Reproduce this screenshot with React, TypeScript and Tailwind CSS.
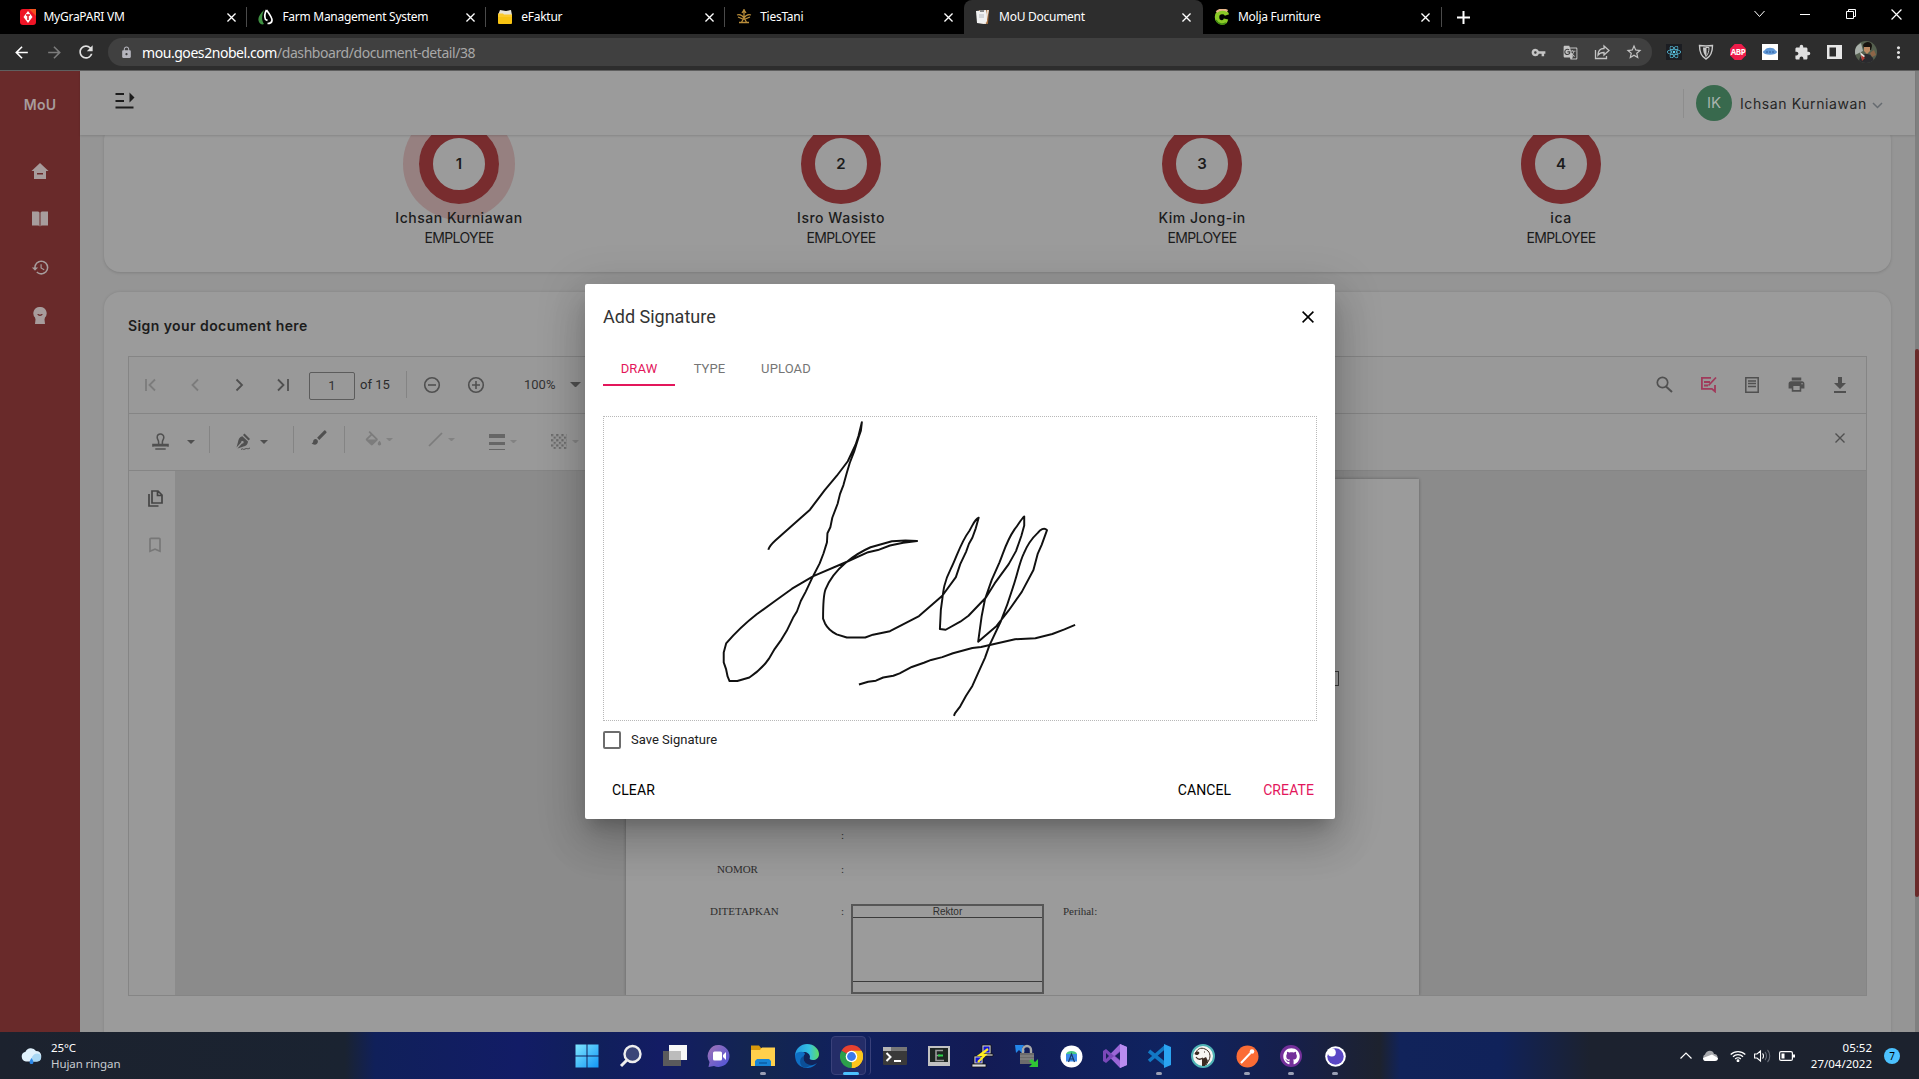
import React from "react";
import {
  MdSearch, MdPrint, MdLock, MdVpnKey, MdStarBorder, MdExtension, MdMoreVert, MdGTranslate,
  MdBrush, MdHistory, MdFormatColorFill, MdOutlineFileCopy, MdBookmarkBorder, MdArrowBack, MdArrowForward, MdRefresh,
} from "react-icons/md";
import { FaReact, FaGithub } from "react-icons/fa";

type Kids = { children?: React.ReactNode };

/* ---------- Browser chrome ---------- */

const Cross = ({ s = 9, w = 1.5, c = "currentColor" }: { s?: number; w?: number; c?: string }) => (
  <svg width={s} height={s} viewBox="0 0 10 10" stroke={c} strokeWidth={w} fill="none"><path d="M.5.5l9 9M9.5.5l-9 9" /></svg>
);

const favicons = {
  grapari: (
    <svg width="16" height="16" viewBox="0 0 16 16"><rect width="16" height="16" rx="3" fill="#ef1426" /><path d="M16 0v7L9 0z" fill="#f4511e" /><path d="M8 2l4.500 6L8 14 3.500 8z" fill="#fff" /><path d="M6 6h4M8 6v5" stroke="#e01425" strokeWidth="1.500" /></svg>
  ),
  farm: (
    <svg width="16" height="16" viewBox="0 0 16 16" fill="none"><path d="M6 1C2 5-1 9 1 13c1 2 3 3 5 2-3-4-2-9 0-14z" fill="#3f9142" /><path d="M8.500 1c3 4 6 8 5.500 10.500-.3 2-2 3-4.500 3M8.500 1C6.800 4 6.500 8 7.500 10.500l2 1" stroke="#fff" strokeWidth="1.700" /></svg>
  ),
  folder: (
    <svg width="16" height="16" viewBox="0 0 16 16"><path d="M1 6l2-5 6 1 5-1 1 5z" fill="#e8e4d6" /><path d="M1 4.500h5l1 1h8V14l-1 1H2l-1-1z" fill="#fbca2b" /><path d="M1 8h14v6l-1 1H2l-1-1z" fill="#f8c312" /></svg>
  ),
  ties: (
    <svg width="16" height="16" viewBox="0 0 16 16" fill="none" stroke="#b98d3a" strokeWidth="1.300"><path d="M8 0v10M6 4l2-3 2 3M1 6c3-1 5 0 7 3 2-3 4-4 7-3M2 8l5 2 2 0 5-2M5 14l3-5 3 5M3 13.500h10" /></svg>
  ),
  doc: (
    <svg width="16" height="16" viewBox="0 0 16 16"><path d="M4 1l10 0-1 14-9-1z" fill="#a8703f" /><path d="M12 1l2 0-3 14h-2z" fill="#e7d9cb" /><path d="M1 2l10-1 1 11-3 3-7-1z" fill="#f1f1f1" /><path d="M5 1h4v2H5z" fill="#888" /><path d="M4 6h5M4 8h5" stroke="#b5bac0" /></svg>
  ),
  molja: (
    <svg width="16" height="16" viewBox="0 0 16 16" fill="none"><path d="M13 6C12 3 10 3 8 3 5 3 3 5 3 8s2 5.500 5 5.500c2 0 3.500-1 4-3.500" stroke="#8ac926" strokeWidth="4.500" /><path d="M2.500 3c3-3 8-3 11-1" stroke="#e6b58a" strokeWidth="2.200" /><path d="M2 11c2 4 6 5 10 3" stroke="#3f8a12" strokeWidth="1.500" /></svg>
  ),
};

const tabs = [
  { icon: favicons.grapari, title: "MyGraPARI VM" },
  { icon: favicons.farm, title: "Farm Management System" },
  { icon: favicons.folder, title: "eFaktur" },
  { icon: favicons.ties, title: "TiesTani" },
  { icon: favicons.doc, title: "MoU Document", active: true },
  { icon: favicons.molja, title: "Molja Furniture" },
];

function TabStrip() {
  return (
    <div className="flex h-[34px] bg-black pl-[8.500px] text-white">
      {tabs.map((t, i) => (
        <div
          key={t.title}
          className={
            "relative flex h-[34px] w-[238.900px] shrink-0 items-center pl-[11px] pr-[11.500px] " +
            (t.active ? "rounded-t-lg bg-[#2d2d2d]" : "")
          }
        >
          {t.icon}
          <span className="ml-2 flex-1 whitespace-nowrap text-[12px] tracking-[-0.27px]">{t.title}</span>
          <Cross />
          {i !== 3 && i !== 4 && <span className="absolute right-0 top-[7px] h-5 w-px bg-[#4a4a4a]" />}
        </div>
      ))}
      <div className="flex w-[44px] items-center justify-center">
        <svg width="13" height="13" viewBox="0 0 13 13" stroke="#fff" strokeWidth="2"><path d="M6.500 0v13M0 6.500h13" /></svg>
      </div>
      <div className="ml-auto flex h-7 items-center">
        <div className="flex w-[46px] justify-center"><svg width="11" height="8" viewBox="0 0 11 8" stroke="#fff" fill="none"><path d="M.5 1l5 5.500 5-5.500" /></svg></div>
        <div className="flex w-[46px] justify-center"><span className="h-px w-[10px] bg-white" /></div>
        <div className="flex w-[46px] justify-center"><svg width="10" height="10" viewBox="0 0 10 10" stroke="#fff" fill="none"><path d="M.5 2.500h7v7h-7zM2.500 2.500v-2h7v7h-2" /></svg></div>
        <div className="flex w-[45px] justify-center"><Cross s={11} w={1.100} /></div>
      </div>
    </div>
  );
}

const Cell = ({ children }: Kids) => <div className="flex w-8 shrink-0 items-center justify-center">{children}</div>;

function AddressBar() {
  return (
    <div className="flex h-[37px] items-center border-b border-[#5f5f5f] bg-[#2d2d2d] text-[#e0e0e0]">
      <div className="flex w-[108px] items-center">
        <div className="flex w-[43px] justify-center text-white"><MdArrowBack size={19} /></div>
        <div className="flex w-[22px] justify-center text-[#7b7b7b]"><MdArrowForward size={19} /></div>
        <div className="flex w-[42px] justify-center"><MdRefresh size={20} /></div>
      </div>
      <div className="flex h-7 w-[1544px] items-center rounded-full bg-[#404040]">
        <div className="flex w-[34px] justify-center pl-[2px] text-[#b5b5bd]"><MdLock size={13} /></div>
        <span className="text-[14px] tracking-[-0.44px] text-white">mou.goes2nobel.com<span className="text-[#a8a8a8]">/dashboard/document-detail/38</span></span>
        <div className="ml-auto flex pr-[2px] text-[#c4c4c4]">
          <Cell><MdVpnKey size={15} /></Cell>
          <Cell><MdGTranslate size={15} /></Cell>
          <Cell>
            <svg width="16" height="16" viewBox="0 0 16 16" fill="none" stroke="currentColor" strokeWidth="1.300"><path d="M1.500 6v8.500h11V12M4 11c0-4 2-6.500 6-6.500V2l5 4.500-5 4.500V8.500C7.500 8.500 5.500 9 4 11z" /></svg>
          </Cell>
          <Cell><MdStarBorder size={18} /></Cell>
        </div>
      </div>
      <div className="ml-1.5 flex">
        <Cell><span className="flex h-4 w-4 items-center justify-center bg-[#1b1d22] text-[#5fd3f3]"><FaReact size={14} /></span></Cell>
        <Cell>
          <svg width="16" height="16" viewBox="0 0 16 16" fill="none" stroke="#c9c9c9" strokeWidth="1.400"><path d="M1.500 1.500C5 2 11 2 14.500 1.500 14.500 9 12 13 8 15 4 13 1.500 9 1.500 1.500z" /><path d="M8 3.500H5c0 4 1 7 3 9z" fill="#c9c9c9" stroke="none" /><path d="M8 3.500h3c0 4-1 7-3 9z" strokeWidth="1" /></svg>
        </Cell>
        <Cell>
          <span className="relative flex h-4 w-4 items-center justify-center">
            <svg className="absolute" width="16" height="16" viewBox="0 0 16 16"><path d="M4.700 0h6.600L16 4.700v6.600L11.300 16H4.700L0 11.300V4.700z" fill="#ee1c4a" /></svg>
            <span className="relative text-[8px] font-bold leading-none tracking-[-0.5px] text-white">ABP</span>
          </span>
        </Cell>
        <Cell>
          <svg width="16" height="16" viewBox="0 0 16 16"><rect width="16" height="16" fill="#fff" /><ellipse cx="8" cy="8" rx="7" ry="2.800" fill="#5f97d6" /><path d="M3 6c1-3 9-3 10 0z" fill="#5f97d6" /><path d="M4 8h8" stroke="#2c5d9c" strokeDasharray="2 1" /></svg>
        </Cell>
        <Cell><MdExtension size={17} /></Cell>
        <Cell><svg width="15" height="14" viewBox="0 0 15 14"><rect x="1.250" y="1.250" width="12.500" height="11.500" fill="none" stroke="#e6e6e6" strokeWidth="2.500" /><rect x="9" y="1" width="5" height="12" fill="#e6e6e6" /></svg></Cell>
        <Cell>
          <svg width="22" height="22" viewBox="0 0 22 22"><defs><clipPath id="av"><circle cx="11" cy="11" r="11" /></clipPath></defs><g clipPath="url(#av)"><rect width="22" height="22" fill="#55604f" /><path d="M0 6l6-4 2 8-8 4z" fill="#a9b0aa" /><path d="M8 4c3-5 9-3 9 1l-1 4-7-1z" fill="#17130f" /><path d="M9 6h6v4l-3 3-3-3z" fill="#bd8a63" /><path d="M4 22c0-7 3-9 8-9 3 0 7 3 7 9z" fill="#2a2a2e" /><path d="M15 12l4-3 2 5-4 2z" fill="#8e6547" /><path d="M5 11l5 4-3 3z" fill="#e8e3df" /><path d="M6 14l4 3-3 3z" fill="#b23b33" /></g></svg>
        </Cell>
        <Cell><MdMoreVert size={19} /></Cell>
      </div>
    </div>
  );
}

/* ---------- Application shell ---------- */

function Sidebar() {
  return (
    <aside className="flex w-20 shrink-0 flex-col items-center bg-[#692a2a] pt-[22px] text-[#a79c9c]">
      <div className="h-6 text-[14px] font-semibold leading-6 tracking-[0.2px]">MoU</div>
      <div className="mt-[30px] flex flex-col">
        <div className="flex h-12 items-center justify-center"><svg width="18" height="16" viewBox="0 0 18 16" fill="currentColor"><path fillRule="evenodd" d="M9 0l8.500 8H15v8H3V8H.5zM6 10v1.600h6V10z" /></svg></div>
        <div className="flex h-12 items-center justify-center"><svg width="16" height="16" viewBox="0 0 16 16" fill="currentColor"><path d="M0 .5h6.300L7.500 1.500v14L6.500 14.500H0zM16 .5H9.700L8.500 1.500v14l1-1H16z" /></svg></div>
        <div className="flex h-12 items-center justify-center"><MdHistory size={19} /></div>
        <div className="flex h-12 items-center justify-center"><svg width="14" height="17" viewBox="0 0 14 17" fill="currentColor"><path fillRule="evenodd" d="M7 0a6.300 6.300 0 0 1 5 10.500l-.5 2L12 17H2l.5-4.500-.5-2A6.300 6.300 0 0 1 7 0zM4.200 7c1 2.500 4.600 2.500 5.600 0H8.500c-.5.800-2.500.800-3 0z" /></svg></div>
      </div>
    </aside>
  );
}

function Header() {
  return (
    <header className="relative z-10 flex h-16 shrink-0 items-center bg-[#9b9b9b] pl-[35px] pr-[32px] shadow-[0_1px_2px_rgba(0,0,0,0.14)]">
      <svg className="mb-[5px]" width="20" height="17" viewBox="0 0 20 17" fill="#1c1c1c"><path d="M.5 1H9v2H.5zM.5 8H9v2H.5zM.5 14.500H18.500v2H.5zM14.500.5l5 5-5 5z" /></svg>
      <div className="ml-auto flex items-center">
        <span className="h-[29px] w-px bg-[#8d8d8d]" />
        <span className="ml-[12px] flex h-9 w-9 items-center justify-center rounded-full bg-[#38694d] text-[15px] text-[#a9b3ad]">IK</span>
        <span className="ml-[8px] w-[128px] whitespace-nowrap text-[14px] tracking-[0.6px] text-[#262626]">Ichsan Kurniawan</span>
        <svg className="ml-[4px] mt-1" width="11" height="7" viewBox="0 0 11 7" fill="none" stroke="#666b70" strokeWidth="1.500"><path d="M1 1l4.500 4.500L10 1" /></svg>
      </div>
    </header>
  );
}

const steps = [
  { n: 1, name: "Ichsan Kurniawan", cls: "w-[382px]", current: true },
  { n: 2, name: "Isro Wasisto", cls: "w-[382px]" },
  { n: 3, name: "Kim Jong-in", cls: "w-[340px]" },
  { n: 4, name: "ica", cls: "w-[378px]" },
];

function SignersCard() {
  return (
    <section className="-mt-[11px] flex h-[148px] shrink-0 rounded-2xl bg-[#9b9b9b] pl-[164px] shadow-[0_1px_3px_rgba(0,0,0,0.15)]">
      {steps.map((s) => (
        <div key={s.n} className={"flex shrink-0 flex-col items-center " + s.cls}>
          <div
            className={
              "flex h-20 w-20 shrink-0 items-center justify-center rounded-full border-[14px] border-[#782c2e] text-[15px] font-semibold text-[#1c1c1c] " +
              (s.current ? "shadow-[0_0_0_16px_#968080]" : "")
            }
          >
            {s.n}
          </div>
          <div className="relative mt-1 whitespace-nowrap text-[14px] font-medium leading-5 tracking-[0.52px] text-[#1c1c1c]">{s.name}</div>
          <div className="text-[14px] leading-5 tracking-[-0.65px] text-[#1c1c1c]">EMPLOYEE</div>
        </div>
      ))}
    </section>
  );
}

/* ---------- PDF viewer ---------- */

const C44 = ({ children }: Kids) => <div className="flex w-11 shrink-0 items-center justify-center">{children}</div>;
const Sep = () => <span className="h-[27px] w-px shrink-0 bg-[#848484]" />;
const Caret = ({ c = "#4f4f4f", w = 8 }: { c?: string; w?: number }) => (
  <svg width={w} height={w / 2} viewBox="0 0 8 4"><path d="M0 0h8L4 4z" fill={c} /></svg>
);
const Chev = ({ d, c }: { d: string; c: string }) => (
  <svg width="14" height="14" viewBox="0 0 14 14" fill="none" stroke={c} strokeWidth="1.800"><path d={d} /></svg>
);

function ViewerToolbar() {
  return (
    <div className="flex h-[57px] items-center border-b border-[#858585] pb-px text-[#505050]">
      <div className="-mr-px flex">
        <C44><Chev c="#7c7c7c" d="M2 1v12M11 1.500L5.500 7l5.500 5.500" /></C44>
        <C44><Chev c="#7c7c7c" d="M10 1.500L4.500 7l5.500 5.500" /></C44>
        <C44><Chev c="#505050" d="M4.500 1.500L10 7l-5.500 5.500" /></C44>
        <C44><Chev c="#505050" d="M2 1.500L7.500 7 2 12.500M12 1v12" /></C44>
      </div>
      <div className="ml-[5px] mt-[2px] flex h-7 w-[46px] items-center justify-center rounded-[2px] border border-[#5c5c5c] text-[13px] text-[#333]">1</div>
      <span className="ml-[5px] w-[46px] pt-px text-[13px] text-[#2b2b2b]">of 15</span>
      <Sep />
      <div className="ml-[3px] flex">
        <C44><svg width="18" height="18" viewBox="0 0 18 18" fill="none" stroke="currentColor" strokeWidth="1.600"><circle cx="9" cy="9" r="7.300" /><path d="M5 9h8" /></svg></C44>
        <C44><svg width="18" height="18" viewBox="0 0 18 18" fill="none" stroke="currentColor" strokeWidth="1.600"><circle cx="9" cy="9" r="7.300" /><path d="M5 9h8M9 5v8" /></svg></C44>
      </div>
      <span className="ml-[26px] w-[46px] pt-px text-[13px] text-[#333]">100%</span>
      <Caret w={11} />
      <div className="ml-auto flex pr-1">
        <C44><svg width="17" height="17" viewBox="0 0 17 17" fill="none" stroke="currentColor" strokeWidth="1.700"><circle cx="6.500" cy="6.500" r="5.200" /><path d="M10 10.500l6 5.500" strokeWidth="2" /></svg></C44>
        <C44><svg width="17" height="17" viewBox="0 0 17 17" fill="none" stroke="#a03a5b" strokeWidth="1.800"><path d="M11 1.900H1.900v11h10L15 15.500V9M4 6h6M4 9.500h4M8.500 9.500l7.500-8" /></svg></C44>
        <C44><svg width="14" height="16" viewBox="0 0 14 16" fill="none" stroke="currentColor" strokeWidth="1.500"><path d="M.8.8h12.400v14.400H.8zM3 4h8M3 6.500h8M3 9.500h8" /></svg></C44>
        <C44><MdPrint size={19} /></C44>
        <C44><svg width="14" height="16" viewBox="0 0 14 16" fill="currentColor"><path d="M5 0h4v6h4l-6 6-6-6h4zM1 14h12v2H1z" /></svg></C44>
      </div>
    </div>
  );
}

function AnnotationToolbar() {
  return (
    <div className="flex h-[57px] items-center border-b border-[#858585] pb-[5px] text-[#505050]">
      <div className="flex w-[80px] items-center pl-[23px] pt-1">
        <svg width="17" height="17" viewBox="0 0 18 18" fill="none" stroke="currentColor" strokeWidth="1.600"><path d="M1 14.500v-2.300h16v2.300M1 13.500h16M7 12V9.500C7 7.500 5.500 7 5.500 4.500a3.500 3.500 0 0 1 7 0C12.500 7 11 7.500 11 9.500V12M3.500 17h11" /></svg>
        <span className="ml-[18px]"><Caret /></span>
      </div>
      <Sep />
      <div className="flex w-[83px] items-center pl-[25px] pt-1">
        <svg width="17" height="18" viewBox="0 0 17 18" fill="currentColor"><path d="M9.500.5L15 6l-1.500 1.500L8 2z" /><path fillRule="evenodd" d="M7.300 3.200L13 8.500C12.500 12 11 13 7 14l-4.500 1.500L7 10.500a1.300 1.300 0 1 0-.9-.9L1.500 14.500 3 9C3.500 6 4.500 4 7.300 3.200z" /><path d="M6 16.500c2-2 2 1 4-.5s2 1 5-1" stroke="currentColor" fill="none" /></svg>
        <span className="ml-[8px]"><Caret /></span>
      </div>
      <Sep />
      <div className="flex w-[50px] items-center justify-center pb-1"><MdBrush size={19} /></div>
      <Sep />
      <div className="flex items-center text-[#7c7c7c]">
        <div className="flex w-[62px] items-center pl-[20px]"><MdFormatColorFill size={17} viewBox="2 0 20 20" /><span className="ml-[4px]"><Caret c="#828282" w={7} /></span></div>
        <div className="flex w-[61px] items-center pl-[21px]"><svg width="15" height="15" viewBox="0 0 15 15" stroke="currentColor" strokeWidth="1.700"><path d="M1 14L14 1" /></svg><span className="ml-[5px]"><Caret c="#828282" w={7} /></span></div>
        <div className="flex w-[62px] items-center pl-[21px] pt-1 text-[#666]"><svg width="16" height="16" viewBox="0 0 16 16" fill="currentColor"><path d="M0 0h16v4H0zM0 8h16v3H0zM0 15h16v1H0z" /></svg><span className="ml-[5px]"><Caret c="#828282" w={7} /></span></div>
        <div className="flex w-[60px] items-center pl-[21px] pt-1">
          <svg width="16" height="15" viewBox="0 0 16 15"><defs><pattern id="chk" width="5.200" height="5.200" patternUnits="userSpaceOnUse"><path d="M0 0h2.200v2.200H0zM2.600 2.600h2.200v2.200H2.600z" fill="#6c6c6c" /></pattern></defs><rect width="16" height="15" fill="url(#chk)" /></svg>
          <span className="ml-[5px]"><Caret c="#828282" w={7} /></span>
        </div>
      </div>
      <div className="ml-auto flex pb-[3px] pr-1"><C44><Cross s={10} w={1.400} /></C44></div>
    </div>
  );
}

function PdfPage() {
  return (
    <div className="relative flex h-[517px] w-[793px] shrink-0 flex-col bg-[#9b9b9b] pt-[192px] font-['Liberation_Serif'] text-[11px] leading-[14px] text-[#2e2e2e] shadow-[0_0_3px_rgba(0,0,0,0.3)]">
      <div className="ml-[701px] h-[15px] w-[12px] border border-[#3b3b3b]" />
      <div className="ml-[215px] mt-[142px] h-[14px]">:</div>
      <div className="mt-[20px] flex h-[14px]"><span className="w-[215px] pl-[91px]">NOMOR</span><span>:</span></div>
      <div className="mt-[28px] flex">
        <span className="w-[215px] pl-[84px]">DITETAPKAN</span>
        <span className="w-[10px]">:</span>
        <div className="flex h-[90px] w-[193px] flex-col border-2 border-[#565656] text-center font-['Liberation_Sans'] text-[10px]">
          <div className="h-[12px] border-b border-[#3b3b3b] leading-[11px]">Rektor</div>
          <div className="mt-auto h-[11px] border-t border-[#3b3b3b]" />
        </div>
        <span className="pl-[19px]">Perihal:</span>
      </div>
    </div>
  );
}

function DocumentCard() {
  return (
    <section className="mt-5 flex h-[760px] shrink-0 flex-col rounded-2xl bg-[#9b9b9b] px-6 pt-[22px] shadow-[0_0_3px_rgba(0,0,0,0.12)]">
      <h2 className="h-6 text-[14px] font-semibold leading-6 tracking-[0.42px] text-[#1c1c1c]">Sign your document here</h2>
      <div className="mt-[18px] flex h-[640px] w-[1739px] flex-col border border-[#858585] bg-[#999] font-['Roboto']">
        <ViewerToolbar />
        <AnnotationToolbar />
        <div className="flex min-h-0 flex-1">
          <div className="flex w-[46px] shrink-0 flex-col items-center pl-[6px] pt-[19px]">
            <svg width="15" height="17" viewBox="0 0 15 17" fill="none" stroke="#454545" strokeWidth="1.700"><path d="M4 1h6l4 4v8H4zM9.500 1v4.500H14M1 4v12h9.500" /></svg>
            <span className="mt-[28px] text-[#777]"><MdBookmarkBorder size={20} /></span>
          </div>
          <div className="flex flex-1 overflow-hidden bg-[#8b8b8b] pl-[451px] pt-2">
            <PdfPage />
          </div>
        </div>
      </div>
    </section>
  );
}

/* ---------- Signature dialog ---------- */

const strokes = [
  "M389 769C390 764 396 752 404 742L440 698L475 655L505 600L530 559L553 517L569 470L575 445L582 406L580 430L575 450L566 490L557 522L551 550L544 585L537 610L532 638L521 678L517 705L511 722L510 748L503 779L495 808L480 848L466 889L456 915L448 945L440 963L427 1000L416 1025L402 1052L390 1080C378 1105 365 1119 350 1133L325 1143H309L305 1130L302 1110L297 1090V1062L302 1036C315 1015 340 980 365 953L405 913L438 880L482 844L550 804L595 776L615 770L640 757C660 750 680 746 696 744L672 743L644 745L600 762C580 774 565 787 548 807C530 828 515 855 507 882C502 900 502 930 502 965L506 979C512 995 520 1003 530 1010L551 1019H589L605 1011L640 1001L700 958L748 900L776 847L785 810L797 775L803 752L810 735L817 708L823 678C815 682 812 696 804 715C785 750 778 790 765 825C752 860 750 885 748 910L745 940L743 995L755 997L785 974L802 957L838 905L856 865L885 810L900 773L911 730L917 700V674C910 683 905 698 897 711C880 745 875 775 866 805L850 855L836 910L829 960L826 990L822 1031L860 986L885 942L912 889L936 827L945 780L953 755L964 713C958 704 950 712 945 721C930 740 922 760 916 780C907 805 903 840 894 875C884 920 877 945 869 972L845 1042L836 1077L822 1120L810 1157L797 1185L785 1215L774 1235L772 1242",
  "M576 1153L595 1145L611 1142L626 1133L647 1128L660 1121L685 1103L710 1091L725 1083L748 1075L770 1064L810 1049L828 1046L898 1024L940 1021L975 1009L1000 996L1022 983",
];

function SignatureDialog() {
  return (
    <div className="absolute left-[585px] top-[213px] z-30 flex h-[535px] w-[750px] flex-col rounded-[2px] bg-white px-[18px] font-['Roboto'] shadow-[0_11px_15px_-7px_rgba(0,0,0,0.2),0_24px_38px_3px_rgba(0,0,0,0.14),0_9px_46px_8px_rgba(0,0,0,0.12)]">
      <div className="flex h-[66px] items-center justify-between pr-[3px]">
        <h3 className="text-[18px] leading-6 text-[#333]">Add Signature</h3>
        <Cross s={12} w={1.300} c="#000" />
      </div>
      <div className="flex h-[36px] text-[13px] leading-[38px] tracking-[0.12px] text-[#757575]">
        <div className="w-[72px] border-b-2 border-[#e3165b] text-center text-[#e3165b]">DRAW</div>
        <div className="w-[69px] text-center">TYPE</div>
        <div className="w-[84px] text-center">UPLOAD</div>
      </div>
      <div className="mt-[30px] h-[305px] w-[714px] border border-dotted border-[#b8b8b8]">
        <svg width="712" height="303" viewBox="50 391 1469 863" preserveAspectRatio="none" fill="none" stroke="#111" strokeWidth="1.950" strokeLinejoin="round">
          {strokes.map((d) => <path key={d} d={d} vectorEffect="non-scaling-stroke" />)}
        </svg>
      </div>
      <div className="mt-[10px] flex h-[18px] items-center">
        <span className="h-[18px] w-[18px] rounded-[2px] border-2 border-[#6d6d6d]" />
        <span className="ml-[10px] text-[13px] text-[#212121]">Save Signature</span>
      </div>
      <div className="mt-[22px] flex h-[38px] items-center pl-[9px] pr-[3px] text-[14px] tracking-[0.1px] text-[#000]">
        <span>CLEAR</span>
        <span className="ml-auto">CANCEL</span>
        <span className="ml-8 text-[#e3165b]">CREATE</span>
      </div>
    </div>
  );
}

/* ---------- Taskbar ---------- */

const taskIcons: { id: string; el: React.ReactNode; run?: boolean; active?: boolean }[] = [
  { id: "start", el: <svg width="24" height="24" viewBox="0 0 24 24"><defs><linearGradient id="win" x2="1" y2="1"><stop stopColor="#7fe6ff" /><stop offset="1" stopColor="#1296f5" /></linearGradient></defs><path d="M.5.5h11v11H.5zM12.500.5h11v11h-11zM.5 12.500h11v11H.5zM12.500 12.500h11v11h-11z" fill="url(#win)" /></svg> },
  { id: "search", el: <svg width="24" height="24" viewBox="0 0 24 24" fill="#3b4578" stroke="#eee" strokeWidth="2.400"><path d="M8 16l-6 6" strokeWidth="3" /><circle cx="13.500" cy="10" r="8" /></svg> },
  { id: "tasks", el: <svg width="24" height="24" viewBox="0 0 24 24"><rect y="7" width="18" height="15" fill="#5a5a5c" /><rect x="6" y="1" width="18" height="15" fill="#f7f7f7" /><rect x="6" y="7" width="12" height="9" fill="#bcbcbc" /></svg> },
  { id: "chat", el: <svg width="24" height="24" viewBox="0 0 24 24"><defs><linearGradient id="ct" x2="1" y2="1"><stop stopColor="#a274b6" /><stop offset="1" stopColor="#4b52d8" /></linearGradient></defs><path d="M12.500 1a11 11 0 1 1-5.500 21L1.500 23l1-5A11 11 0 0 1 12.500 1z" fill="url(#ct)" /><rect x="6" y="7.500" width="9" height="9" rx="1.500" fill="#fff" /><path d="M16 11l3-3v8l-3-3z" fill="#fff" /></svg> },
  { id: "files", run: true, el: <svg width="24" height="24" viewBox="0 0 24 24"><path d="M0 1.500h8l2 2.500h14v5H0z" fill="#d99a0b" /><path d="M0 6h9l2-2.500h13V22H0z" fill="#ffd04c" /><path d="M4 22v-5l2-2h12l2 2v5z" fill="#1785d6" /><path d="M8 19h8" stroke="#0c5ea5" strokeWidth="1.500" /></svg> },
  { id: "edge", el: <svg width="24" height="24" viewBox="0 0 24 24"><defs><linearGradient id="eg" x2="1"><stop stopColor="#2296e2" /><stop offset=".6" stopColor="#35c1e0" /><stop offset="1" stopColor="#5fdc62" /></linearGradient></defs><path d="M0 11C1 4 6 0 12 0c7 0 12 5 12 10 0 4-3 6-6 6-3 0-4-1-3-3 0-3-3-5-6-5-4 0-8 2-9 5z" fill="url(#eg)" /><path d="M0 11c2-4 10-4 10-1-3 3-2 9 3 11 3 1 6 0 9-2-3 4-7 5-10 5C5 24 0 19 0 11z" fill="#0f6fc4" /><path d="M8.500 12c-1 5 3 9 8 9-3 2-6 3-8 2.500C4 21 4 14 8.500 12z" fill="#0b4f97" /></svg> },
  { id: "chrome", active: true, el: <svg width="23" height="23" viewBox="0 0 24 24"><path d="M12 12L1.600 6A12 12 0 0 1 22.400 6z" fill="#e8412f" /><path d="M12 12l10.400-6A12 12 0 0 1 12 24z" fill="#fcc61c" /><path d="M12 12v12A12 12 0 0 1 1.600 6z" fill="#2c9f4b" /><path d="M12 6h10.400A12 12 0 0 1 12 24l5.200-9z" fill="#fcc61c" /><circle cx="12" cy="12" r="6" fill="#fff" /><circle cx="12" cy="12" r="4.600" fill="#3b79ec" /></svg> },
  { id: "terminal", el: <svg width="24" height="18" viewBox="0 0 24 18"><rect width="24" height="18" rx="1" fill="#3a3a3a" /><path d="M0 0h24v4H0z" fill="#777" /><path d="M0 0h8v4H0z" fill="#b5b5b5" /><path d="M3.500 6l4 4-4 4M11 14h7" stroke="#fff" strokeWidth="2" fill="none" /></svg> },
  { id: "git", el: <svg width="22" height="20" viewBox="0 0 22 20"><rect width="22" height="20" fill="#c2c2c2" /><rect x="2" y="2" width="18" height="14" fill="#1e2622" /><path d="M15 4.500H8v10h8M8 9.500h4" stroke="#999" strokeWidth="1.600" fill="none" /><path d="M10 9.500h5" stroke="#2bd548" strokeWidth="2" /></svg> },
  { id: "putty", el: <svg width="24" height="24" viewBox="0 0 24 24"><g stroke="#111" strokeWidth=".8"><path d="M11 1h9v9h-9zM3 12h9v8H3z" fill="#cfcfcf" /><path d="M9 10h13v2H9zM1 20h14v3H1z" fill="#ddd" /></g><path d="M12.500 2.500h6v6h-6zM4.500 13.500h6v5h-6z" fill="#1414d8" /><path d="M17 5l-8 6 5 0-7 7" stroke="#ffee1f" strokeWidth="2.200" fill="none" /></svg> },
  { id: "scp", el: <svg width="24" height="24" viewBox="0 0 24 24"><path d="M0 1h9L7 4l3 3-3 2-3-3-3 3z" fill="#2387ea" /><path d="M8 10V6a4 4 0 0 1 8 0v4" stroke="#a9a9a9" strokeWidth="2.400" fill="none" /><rect x="5" y="9" width="14" height="11" fill="#6c6c6c" /><path d="M5 12h14M5 15h14" stroke="#8f8f8f" /><path d="M23 23h-9l3-3-3-3 3-2 3 3 3-3z" fill="#2fc734" /></svg> },
  { id: "android", el: <svg width="23" height="23" viewBox="0 0 23 23"><circle cx="11.500" cy="11.500" r="11" fill="#fff" /><path d="M6 9h11v7.500H6z" fill="#3c8bea" /><path d="M6 9c1-4 10-4 11 0z" fill="#46c887" /><path d="M8.500 17l3-8 3 8M9.500 14h4" stroke="#173a6b" strokeWidth="1.200" fill="none" /></svg> },
  { id: "vs", el: <svg width="24" height="24" viewBox="0 0 24 24"><path d="M17 0l7 3v18l-7 3L2 8.500 0 7v10l2-1.500z" fill="#9a66d6" /><path d="M0 7l3-2 14 12V7L3 19l-3-2z" fill="#7a48b8" /><path d="M17 0l7 3v18l-7 3z" fill="#b98cf0" /><path d="M3 9v6l3-3z" fill="#17205a" /><path d="M17 8v8l-5-4z" fill="#17205a" /></svg> },
  { id: "vscode", run: true, el: <svg width="24" height="24" viewBox="0 0 24 24"><path d="M2 7l16 13M2 17L18 3" stroke="#1279c4" strokeWidth="3.600" /><path d="M17 0l7 3v18l-7 3z" fill="#2aa4f2" /></svg> },
  { id: "dbeaver", el: <svg width="24" height="24" viewBox="0 0 24 24"><circle cx="12" cy="12" r="11" fill="#f7f5f2" stroke="#4fb3b5" strokeWidth="2" /><path d="M5 9C6 5 10 3 14 5c5 2 6 7 4 11l-3 5" fill="none" stroke="#3b2a21" /><path d="M3.500 10c1-3 4-3 5-1-1 2-3 3-5 1zM11 15l4-2 2 4-3 5-3 0z" fill="#3b2a21" /><path d="M5 13c2 3 4 3 7 1M13 8h1" stroke="#3b2a21" strokeWidth="1.200" fill="none" /></svg> },
  { id: "postman", run: true, el: <svg width="23" height="23" viewBox="0 0 23 23"><circle cx="11.500" cy="11.500" r="11" fill="#fb6c35" /><path d="M5 18L14.500 8" stroke="#fff" strokeWidth="2" /><circle cx="16" cy="6.500" r="2.300" fill="#fff" /></svg> },
  { id: "github", run: true, el: <span className="flex h-[22px] w-[22px] items-center justify-center rounded-full bg-[#74309a] text-white"><FaGithub size={17} /></span> },
  { id: "insomnia", run: true, el: <svg width="21" height="21" viewBox="0 0 21 21"><circle cx="10.500" cy="10.500" r="10.300" fill="#fff" /><circle cx="10.500" cy="10.500" r="8.200" fill="#5a47c4" /><circle cx="6.800" cy="6.500" r="4" fill="#fff" /></svg> },
];

function Taskbar() {
  return (
    <footer className="flex h-[47px] shrink-0 items-center bg-[linear-gradient(90deg,#1c222e_0px,#1a2331_345px,#10205a_375px,#121c66_520px,#10205a_590px,#131c64_660px,#13264f_760px,#10205e_850px,#131b55_980px,#0f2360_1170px,#161f4b_1290px,#1d222e_1380px,#11235a_1400px,#10225a_1500px,#1c222f_1590px,#1c222e_1919px)] text-white">
      <div className="flex w-[565px] items-center pl-[20px]">
        <svg width="23" height="18" viewBox="0 0 23 18"><path d="M6 14.500a5 5 0 0 1-.5-9.800A6 6 0 0 1 16 4a5.300 5.300 0 0 1 1 10.500z" fill="#dff0fb" /><path d="M11 14.500c0-5 3-8 6-8a4 4 0 0 1 0 8z" fill="#a9d7f3" /><path d="M11.500 11c3 4 2 6 0 6s-3-2 0-6z" fill="#2b87e8" /></svg>
        <div className="ml-2 pt-px text-[11.500px] leading-4 tracking-[-0.1px]">
          <div>25°C</div>
          <div className="text-[#c9ccd1]">Hujan ringan</div>
        </div>
      </div>
      <div className="flex h-full">
        {taskIcons.map((t) => (
          <div key={t.id} className="relative flex h-full w-11 items-center justify-center pt-[1px]">
            {t.active && <span className="absolute inset-y-1 left-[2px] right-[7px] rounded border border-[#39417a] bg-[#242d68]" />}
            {t.active && <span className="absolute inset-y-1 right-[2px] w-[5px] rounded-r border-r border-[#39417a]" />}
            <span className="relative">{t.el}</span>
            {t.run && <span className="absolute bottom-1 h-[3px] w-[6px] rounded-full bg-[#9a9fb4]" />}
            {t.active && <span className="absolute bottom-1 h-[3px] w-4 rounded-full bg-[#4cc2ff]" />}
          </div>
        ))}
      </div>
      <div className="ml-auto flex items-center pr-[19px]">
        <svg width="12" height="7" viewBox="0 0 12 7" fill="none" stroke="#fff" strokeWidth="1.200"><path d="M.5 6.500L6 1l5.500 5.500" /></svg>
        <svg className="ml-[10px]" width="16" height="11" viewBox="0 0 16 11"><path d="M3 10a3 3 0 0 1 0-5.500C4 0 11-1 12 4a3 3 0 0 1 1 6z" fill="#a7a9ad" /><path d="M1 8l9-3.500L16 8c0 2-1 3-3 3H3C2 11 1 10 1 8z" fill="#fff" /></svg>
        <svg className="ml-[12px]" width="16" height="12" viewBox="0 0 16 12" fill="none" stroke="#fff" strokeWidth="1.300"><path d="M.7 4.500a10.500 10.500 0 0 1 14.600 0M3 6.800a7 7 0 0 1 10 0M5.200 9a4 4 0 0 1 5.600 0" /><circle cx="8" cy="10.700" r=".8" fill="#fff" /></svg>
        <svg className="ml-[8px]" width="17" height="14" viewBox="0 0 17 14" fill="none" stroke="#fff" strokeWidth="1.100"><path d="M.6 5v4H3l3.500 3V2L3 5zM8.500 4.500c1.300 1 1.300 4 0 5" /><path d="M11 3c2 2 2 6 0 8M13.500 1c3 3 3 9 0 12" stroke="#666b76" /></svg>
        <svg className="ml-[8px]" width="16" height="10" viewBox="0 0 16 10"><rect x=".6" y=".6" width="12.800" height="8.800" rx="1.500" fill="none" stroke="#fff" strokeWidth="1.200" /><path d="M2.500 2.500h3v5h-3zM14 3.500h2v3h-2z" fill="#fff" /></svg>
        <div className="ml-[12px] w-[65px] whitespace-nowrap text-right text-[11.500px] leading-4 tracking-[0px]">
          <div>05:52</div>
          <div>27/04/2022</div>
        </div>
        <span className="ml-3 flex h-4 w-4 items-center justify-center rounded-full bg-[#4cc2ff] text-[10px] leading-none text-black">7</span>
      </div>
    </footer>
  );
}

export default function App() {
  return (
    <div className="flex h-[1079px] w-[1919px] flex-col overflow-hidden bg-[#959595] font-['Noto_Sans','Open_Sans',sans-serif]">
      <TabStrip />
      <AddressBar />
      <div className="relative flex min-h-0 flex-1 overflow-hidden font-['Inter',sans-serif]">
        <Sidebar />
        <div className="flex min-w-0 flex-1 flex-col">
          <Header />
          <main className="flex min-h-0 flex-1 flex-col overflow-hidden pl-6 pr-6">
            <SignersCard />
            <DocumentCard />
          </main>
        </div>
        <div className="flex w-[4px] shrink-0 flex-col bg-[#808080] pt-[278px]">
          <span className="h-[548px] rounded-sm bg-[#692a2a]" />
        </div>
        <SignatureDialog />
      </div>
      <Taskbar />
    </div>
  );
}
